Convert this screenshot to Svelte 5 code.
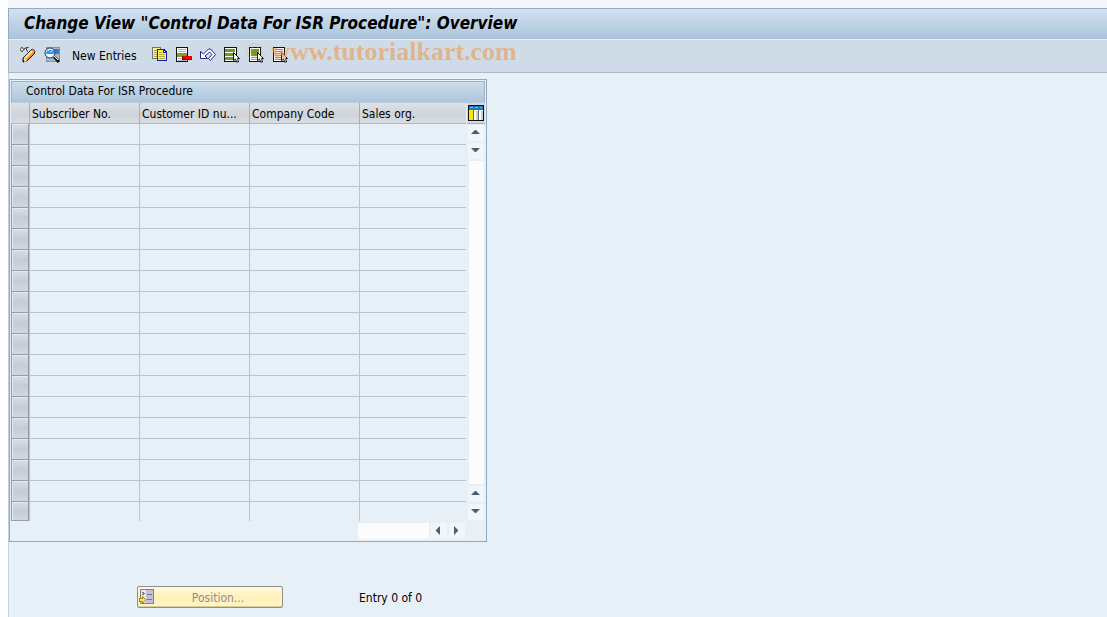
<script>
	let columns = ['Subscriber No.', 'Customer ID nu...', 'Company Code', 'Sales org.'];
	let rows = Array.from({ length: 19 }, (_, i) => i + 1);
</script>

<div class="window">
	<header class="title">
		<h1 class="title__text">Change View "Control Data For ISR Procedure": Overview</h1>
	</header>

	<div class="toolbar">
		<button type="button" class="tool" aria-label="Display or change">
			<svg viewBox="0 0 16 16" width="16" height="16">
				<path d="M.5 2.5l1-2h1l1 2-1 2h-1zM4 3l1-2h1l1 3h1M6 1l3-1" fill="#fff" stroke="#333" />
				<path d="M3 11l8-8 2-1 2 2-1 3-7 7-4 1z" fill="#f49b24" stroke="#111" />
				<path d="M5 11l7-7" stroke="#ffe9a0" stroke-width="2" />
				<path d="M4 11l3 3-3 1z" fill="#fff" />
				<path d="M3 13l2 1-2 1z" fill="#111" />
				<path d="M12 3l1-1 2 2-1 1z" fill="#e08aa0" />
			</svg>
		</button>
		<button type="button" class="tool" aria-label="Details">
			<svg viewBox="0 0 16 16" width="16" height="16">
				<path d="M2 0h14v15H2z" fill="#7f92b2" />
				<path d="M3 1h12v13H3z" fill="#a9b6cb" />
				<path d="M3 2h12v5H3z" fill="#2b7fd0" />
				<circle cx="6" cy="6" r="5" fill="#f0f8ff" stroke="#26374b" />
				<path d="M3 3h7v4H2z" fill="#2a98f0" />
				<path d="M3 3h2v1H3zM6 4h2v1H6zM8 3h1v1H8z" fill="#9cd6ff" />
				<path d="M10 10l5 5" stroke="#111" stroke-width="3" />
				<path d="M10 9l4 4" stroke="#fff" />
			</svg>
		</button>
		<button type="button" class="tool tool--text">New Entries</button>
		<button type="button" class="tool" aria-label="Copy as">
			<svg viewBox="0 0 16 16" width="16" height="16" shape-rendering="crispEdges">
				<path d="M0 0h9v12H0z" fill="#777760" />
				<path d="M1 1h7v10H1z" fill="#ffef70" />
				<path d="M2 3h3v1H2zM2 5h3v1H2zM2 7h3v1H2zM2 9h3v1H2z" fill="#a8a470" />
				<path d="M5 2h7l3 3v9H5z" fill="#1719bd" />
				<path d="M6 3h5v3h3v7H6z" fill="#fff047" />
				<path d="M7 5h3v1H7zM7 7h6v1H7zM7 9h6v1H7zM7 11h6v1H7z" fill="#b5ad3c" />
				<path d="M12 4h1v1h-1z" fill="#fff" />
			</svg>
		</button>
		<button type="button" class="tool" aria-label="Delete">
			<svg viewBox="0 0 16 16" width="16" height="16" shape-rendering="crispEdges">
				<path d="M0 0h12v15H0z" fill="#111" />
				<path d="M1 1h10v13H1z" fill="#fff" />
				<path d="M2 2h8v1H2zM2 4h8v1H2zM2 11h8v1H2zM2 13h8v1H2z" fill="#a8b4c6" />
				<path d="M1 6h10v4H1z" fill="#76a32a" />
				<path d="M6 9h10v4H6z" fill="#8e0000" />
				<path d="M7 9h9v3H7z" fill="#f00000" />
			</svg>
		</button>
		<button type="button" class="tool" aria-label="Undo change">
			<svg viewBox="0 0 16 16" width="16" height="16">
				<path
					d="M.5 4.5v7h7l-2.500-2.500 4.500-4 2.500 2.500-3.500 4 2 2 5-6-5-5.500h-2l-5 5z"
					fill="#fff"
					stroke="#202090"
				/>
			</svg>
		</button>
		<button type="button" class="tool" aria-label="Select all">
			<svg viewBox="0 0 16 16" width="16" height="16">
				<path d="M0 0h13v15H0z" fill="#111" />
				<path d="M1 1h11v13H1z" fill="#fff" />
				<path d="M1 2h10v3H1zM1 6h10v3H1zM1 10h10v3H1z" fill="#6d9c22" />
				<path d="M9.500 5.500v8l2-1.500 1 3h2l-1-3.500h2z" fill="#fff" stroke="#111" />
			</svg>
		</button>
		<button type="button" class="tool" aria-label="Select block">
			<svg viewBox="0 0 16 16" width="16" height="16">
				<path d="M1 0h12v15H1z" fill="#111" />
				<path d="M2 1h10v13H2z" fill="#fff" />
				<path d="M3 2h8v7H3z" fill="#6d9c22" />
				<path d="M3 10h7v1H3zM3 12h7v1H3z" fill="#8797b0" />
				<path d="M9.500 5.500v8l2-1.500 1 3h2l-1-3.500h2z" fill="#fff" stroke="#111" />
			</svg>
		</button>
		<button type="button" class="tool" aria-label="Deselect all">
			<svg viewBox="0 0 16 16" width="16" height="16">
				<path d="M1 0h12v15H1z" fill="#111" />
				<path d="M2 1h10v13H2z" fill="#fff" />
				<path d="M3 2h8v1H3zM3 4h8v1H3zM3 6h8v1H3zM3 8h8v1H3zM3 10h7v1H3zM3 12h7v1H3z" fill="#8090aa" />
				<path d="M9.500 5.500v8l2-1.500 1 3h2l-1-3.500h2z" fill="#fff" stroke="#111" />
			</svg>
		</button>
		<div class="watermark"><span class="watermark__sign">©</span> www.tutorialkart.com</div>
	</div>

	<main class="content">
		<section class="panel">
			<h2 class="panel__title">Control Data For ISR Procedure</h2>
			<div class="panel__body">
				<table class="table">
					<colgroup>
						<col class="col-select" />
						<col class="col" />
						<col class="col" />
						<col class="col" />
						<col class="col" />
					</colgroup>
					<thead>
						<tr>
							<td class="table__corner"></td>
							{#each columns as column}
								<th class="table__head" scope="col">{column}</th>
							{/each}
						</tr>
					</thead>
					<tbody>
						{#each rows as row}
							<tr>
								<td class="table__select">
									<button type="button" class="select" aria-label="Select row {row}"></button>
								</td>
								{#each columns as column}
									<td class="table__cell"></td>
								{/each}
							</tr>
						{/each}
					</tbody>
				</table>

				<div class="side">
					<button type="button" class="config" aria-label="Table settings">
						<svg viewBox="0 0 16 16" width="16" height="16" shape-rendering="crispEdges">
							<path d="M0 0h16v16H0z" fill="#111" />
							<path d="M1 1h14v4H1z" fill="#1c77bb" />
							<path d="M2 2h3v1H2zM7 2h3v1H7zM12 2h2v1h-2z" fill="#79bbe8" />
							<path d="M1 5h5v10H1z" fill="#ffe600" />
							<path d="M6 5h4v10H6zM11 5h4v10h-4z" fill="#fff" />
							<path d="M5 5h1v10H5zM10 5h1v10h-1z" fill="#62676d" />
							<path d="M8 6h2v9H8zM13 6h2v9h-2z" fill="#c8cdd6" />
						</svg>
					</button>
					<div class="scroll">
						<button type="button" class="arrow" aria-label="First row">
							<svg viewBox="0 0 16 16" width="16" height="16"><path d="M3 9l4-4h1l4 4z" fill="#4b5f6e" /></svg>
						</button>
						<button type="button" class="arrow" aria-label="Previous row">
							<svg viewBox="0 0 16 16" width="16" height="16"><path d="M3 5h9l-4 4H7z" fill="#4b5f6e" /></svg>
						</button>
						<div class="scroll__track"></div>
						<button type="button" class="arrow" aria-label="Next row">
							<svg viewBox="0 0 16 16" width="16" height="16"><path d="M3 9l4-4h1l4 4z" fill="#4b5f6e" /></svg>
						</button>
						<button type="button" class="arrow" aria-label="Last row">
							<svg viewBox="0 0 16 16" width="16" height="16"><path d="M3 5h9l-4 4H7z" fill="#4b5f6e" /></svg>
						</button>
					</div>
				</div>
			</div>
			<div class="hscroll">
				<div class="hscroll__track"></div>
				<button type="button" class="arrow" aria-label="Scroll left">
					<svg viewBox="0 0 16 16" width="16" height="16"><path d="M9 3v9L5 8V7z" fill="#4b5f6e" /></svg>
				</button>
				<button type="button" class="arrow" aria-label="Scroll right">
					<svg viewBox="0 0 16 16" width="16" height="16"><path d="M5 3v9l4-4V7z" fill="#4b5f6e" /></svg>
				</button>
			</div>
		</section>

		<div class="footer">
			<button type="button" class="position" disabled>
				<svg viewBox="0 0 16 16" width="16" height="16" shape-rendering="crispEdges">
					<path d="M1 0h14v15H1z" fill="#828282" />
					<path d="M2 1h5v13H2z" fill="#e9e9ee" />
					<path d="M7 1h7v13H7z" fill="#c0c0dc" />
					<path d="M3 3h2v1H3zM4 4h2v1H4zM3 5h2v1H3zM8 5h5v1H8zM8 10h5v1H8z" fill="#777" />
					<path d="M0 9h3V7l4 4-4 4v-2H0z" fill="#a58b22" />
					<path d="M1 10h3V9l2 2-2 2v-1H1z" fill="#ffe254" />
				</svg>
				<span class="position__text">Position...</span>
			</button>
			<p class="entry">Entry 0 of 0</p>
		</div>
	</main>
</div>

<style>
	:global(body) {
		background: #f3f6fa;
	}
	* {
		margin: 0;
		box-sizing: border-box;
	}
	button {
		border: none;
		padding: 0;
		background: transparent;
		font: inherit;
		color: inherit;
	}
	svg {
		display: block;
	}
	.window {
		display: flex;
		flex-direction: column;
		min-height: 100vh;
		padding: 8px 0 0 8px;
		background: linear-gradient(90deg, #fcfdfe 8px, transparent 8px);
		font-family: Tahoma, 'DejaVu Sans Condensed', 'DejaVu Sans', sans-serif;
		font-size: 12px;
		line-height: 16px;
		color: #000;
	}
	.title {
		height: 32px;
		padding: 4px 15px;
		border-top: 1px solid #94acc3;
		border-left: 1px solid #94acc3;
		border-bottom: 1px solid #e4edf5;
		background: linear-gradient(#d2e1ee, #abc4dc);
	}
	.title__text {
		font-size: 17px;
		line-height: 20px;
		font-weight: 700;
		font-style: italic;
		white-space: nowrap;
	}
	.toolbar {
		position: relative;
		display: flex;
		align-items: center;
		gap: 8px;
		height: 33px;
		padding: 0 11px 3px;
		border-left: 1px solid #a4b9cc;
		border-bottom: 1px solid #a4b9cc;
		background: #cfdce7;
	}
	.tool {
		min-width: 16px;
		height: 16px;
		white-space: nowrap;
	}
	.tool--text {
		min-width: 76px;
		height: 18px;
		padding: 2px 4px 0;
		text-align: left;
	}
	.watermark {
		position: absolute;
		left: 236px;
		top: -4px;
		font-family: 'Liberation Serif', serif;
		font-size: 26px;
		line-height: 32px;
		font-weight: 700;
		color: rgba(235, 158, 88, 0.65);
		white-space: nowrap;
		pointer-events: none;
	}
	.watermark__sign {
		font-weight: 400;
		opacity: 0.5;
	}
	.content {
		flex: 1;
		padding-top: 6px;
		border-left: 1px solid #c3d1de;
		background: #e8f0f7;
	}
	.panel {
		width: fit-content;
		padding: 1px;
		border: 1px solid #8fa9c2;
	}
	.panel__title {
		height: 22px;
		padding: 1px 14px;
		border: 1px solid #9db2c6;
		border-bottom-color: #b9cbdc;
		background: linear-gradient(#cddeec, #adc5dc);
		font-size: 12px;
		line-height: 16px;
		font-weight: 400;
	}
	.panel__body {
		display: flex;
		gap: 1px;
	}
	.table {
		width: 455px;
		table-layout: fixed;
		border-collapse: separate;
		border-spacing: 0;
	}
	.col-select {
		width: 19px;
	}
	.col {
		width: 110px;
	}
	.col:last-child {
		width: 106px;
	}
	td,
	th {
		height: 21px;
		padding: 0;
	}
	.table__corner,
	.table__head {
		border-right: 1px solid #a5afba;
		border-bottom: 1px solid #b1bac3;
		background: linear-gradient(#dee1e4, #cfd4da 60%, #d9dde1);
	}
	.table__head {
		padding: 2px 2px 0;
		font-weight: 400;
		text-align: left;
		white-space: nowrap;
	}
	.table__head:last-child {
		border-right: none;
	}
	.table__select {
		border-right: 1px solid #b4bfcf;
	}
	.select {
		display: block;
		width: 18px;
		height: 21px;
		border: 1px solid #929eac;
		border-top: none;
		background: linear-gradient(#d9dee5, #c5ccd5 50%, #d2d7df);
		box-shadow: inset 1px 1px #e6eaef;
	}
	.table__cell {
		border-right: 1px solid #b8c3d3;
		border-bottom: 1px solid #b8c3d3;
	}
	.table__cell:last-child {
		border-right: none;
	}
	tr:last-child .table__cell {
		border-bottom: none;
	}
	tbody tr:last-child td {
		height: 19px;
	}
	tbody tr:last-child .select {
		height: 19px;
	}
	.side {
		display: flex;
		flex-direction: column;
	}
	.config {
		padding: 2px 1px;
		height: 21px;
		border-bottom: 1px solid #a5b1bd;
		background: #d5d9de;
	}
	.scroll {
		display: flex;
		flex: 1;
		flex-direction: column;
		align-items: flex-end;
		gap: 2px;
		padding: 1px;
	}
	.scroll__track {
		flex: 1;
		width: 15px;
		background: #fcfcfc;
	}
	.arrow {
		width: 16px;
		height: 16px;
		background: #f2f6fb;
	}
	.hscroll {
		display: flex;
		justify-content: flex-end;
		gap: 2px;
		padding: 2px 20px 1px 0;
	}
	.hscroll__track {
		width: 71px;
		height: 16px;
		background: #fcfcfc;
	}
	.footer {
		display: flex;
		align-items: center;
		gap: 76px;
		padding: 44px 0 8px 128px;
	}
	.position {
		display: flex;
		align-items: center;
		width: 146px;
		height: 22px;
		padding: 0 1px;
		border: 1px solid #8e8e8e;
		border-radius: 2px;
		background: linear-gradient(#fffae0, #fff0b8 50%, #fff4ca);
		box-shadow: inset 0 -1px #d9cc98;
		color: #8f8f8f;
	}
	.position__text {
		flex: 1;
		padding-top: 2px;
		text-align: center;
	}
	.entry {
		padding-top: 2px;
	}
</style>
